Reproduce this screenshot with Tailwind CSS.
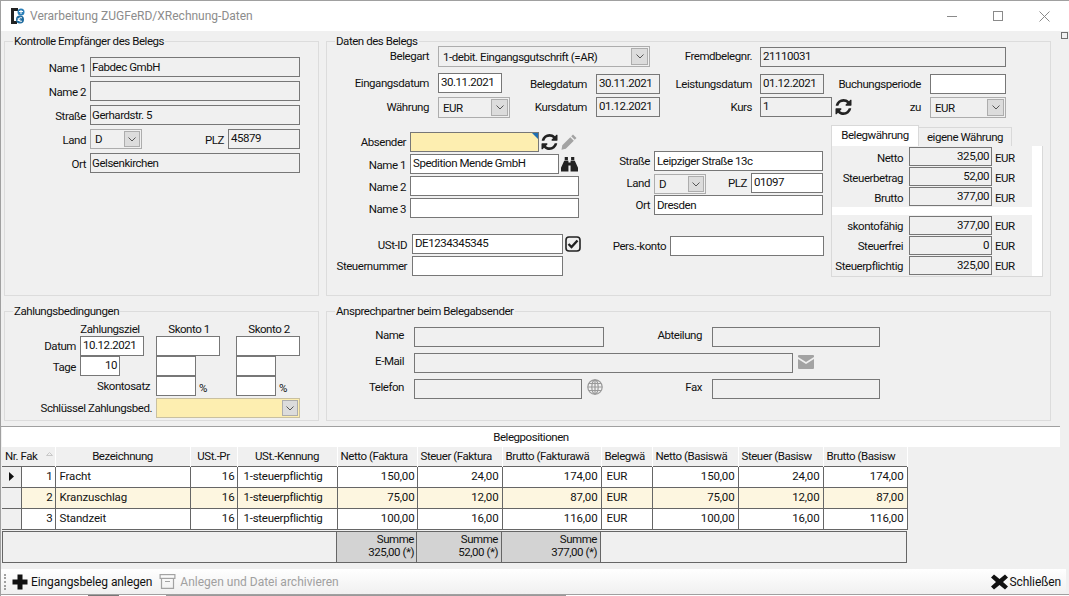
<!DOCTYPE html>
<html lang="de">
<head>
<meta charset="UTF-8">
<title>Verarbeitung ZUGFeRD/XRechnung-Daten</title>
<script src="https://cdn.jsdelivr.net/npm/@tailwindcss/browser@4"></script>
</head>
<body class="h-[596px] w-[1069px] overflow-hidden bg-white font-['Roboto',sans-serif] text-[11.5px] leading-5 tracking-[-0.45px] text-[#111]">
<div class="relative flex h-[596px] flex-col border-t border-l border-[#a0a0a0] bg-[#f0f0f0]">

  <!-- Titelleiste -->
  <div class="flex h-[30px] items-center bg-white">
    <svg class="ml-[10px] h-[16px] w-[14px]" viewBox="0 0 14 16"><path fill="#222" d="M0 0h7v3H3v10h3v3H0z"/><circle cx="10" cy="4" r="3.5" fill="#2b7fb8"/><circle cx="9" cy="11.500" r="4" fill="#1d6a9e"/><path d="M8 3.500h4M10 2v4M11 10a2 2 0 1 0 0 3M6.500 11h3M6.500 12.500h3" stroke="#fff" stroke-width="1" fill="none"/></svg>
    <span class="ml-[5px] text-[12px] tracking-[0] text-[#8c8c8c]">Verarbeitung ZUGFeRD/XRechnung-Daten</span>
    <div class="ml-auto mr-[2px] flex h-full items-center">
      <div class="flex h-full w-[46px] items-center justify-center"><div class="h-px w-[10px] bg-[#8a8a8a]"></div></div>
      <div class="flex h-full w-[46px] items-center justify-center"><div class="h-[10px] w-[10px] border border-[#8a8a8a]"></div></div>
      <div class="flex h-full w-[46px] items-center justify-center"><svg class="h-[11px] w-[11px]" viewBox="0 0 11 11"><path d="M0.500 0.500l10 10M10.500 0.500l-10 10" stroke="#8a8a8a" fill="none"/></svg></div>
    </div>
  </div>
  <div class="absolute right-[1px] top-[31px] h-[7px] w-[7px] border border-[#707070] bg-[#f0f0f0]"></div>

  <!-- obere Gruppen -->
  <div class="mt-[10px] grid h-[255px] grid-cols-[315px_725px] gap-x-[7px] pl-[3px]">

    <div class="relative border border-[#dcdcdc] pt-[15px] leading-[22px]">
      <span class="absolute -top-[11px] left-[8px] bg-[#f0f0f0] px-px leading-5">Kontrolle Empfänger des Belegs</span>
      <div class="flex h-5"><span class="w-[81px] text-right">Name 1</span><div class="ml-1 h-5 w-[210px] border border-[#777] px-[1px] leading-[19px]">Fabdec GmbH</div></div>
      <div class="mt-1 flex h-5"><span class="w-[81px] text-right">Name 2</span><div class="ml-1 h-5 w-[210px] border border-[#777] px-[1px] leading-[19px]"></div></div>
      <div class="mt-1 flex h-5"><span class="w-[81px] text-right">Straße</span><div class="ml-1 h-5 w-[210px] border border-[#777] px-[1px] leading-[19px]">Gerhardstr. 5</div></div>
      <div class="mt-1 flex h-5"><span class="w-[81px] text-right">Land</span>
        <div class="ml-1 flex h-5 w-[52px] items-center border border-[#adadad] pl-1 leading-5">D<span class="ml-auto mr-px flex h-4 w-4 items-center justify-center border border-[#adadad] bg-[#dcdcdc]"><svg class="h-[5px] w-[8px]" viewBox="0 0 8 5"><path d="M0.500 0.500l3.500 3.500l3.500-3.500" stroke="#555" fill="none"/></svg></span></div>
        <span class="w-[82px] text-right">PLZ</span><div class="ml-1 h-5 w-[72px] border border-[#777] px-[2px] leading-[17px]">45879</div></div>
      <div class="mt-1 flex h-5"><span class="w-[81px] text-right">Ort</span><div class="ml-1 h-5 w-[210px] border border-[#777] px-[1px] leading-[19px]">Gelsenkirchen</div></div>
    </div>

    <div class="relative border border-[#dcdcdc] pt-[4px]">
      <span class="absolute -top-[11px] left-[8px] bg-[#f0f0f0] px-px">Daten des Belegs</span>

      <div class="flex h-[21px]"><span class="w-[102px] text-right">Belegart</span>
        <div class="ml-[9px] flex h-[21px] w-[212px] items-center border border-[#adadad] pl-1">1-debit. Eingangsgutschrift (=AR)<span class="ml-auto mr-px flex h-[17px] w-[17px] items-center justify-center border border-[#adadad] bg-[#dcdcdc]"><svg class="h-[5px] w-[8px]" viewBox="0 0 8 5"><path d="M0.500 0.500l3.500 3.500l3.500-3.500" stroke="#555" fill="none"/></svg></span></div>
        <span class="w-[102px] text-right">Fremdbelegnr.</span><div class="ml-2 mt-px h-5 w-[246px] border border-[#777] px-[2px] leading-[17px]">21110031</div></div>

      <div class="mt-[6px] flex h-[21px]"><span class="w-[102px] text-right">Eingangsdatum</span>
        <div class="ml-[9px] h-5 w-16 border border-[#777] bg-white px-[2px] leading-[17px]">30.11.2021</div>
        <span class="mt-px w-[85px] text-right">Belegdatum</span><div class="ml-[9px] mt-px h-5 w-16 border border-[#777] px-[2px] leading-[17px]">30.11.2021</div>
        <span class="mt-px w-[92px] text-right">Leistungsdatum</span><div class="ml-2 mt-px h-5 w-16 border border-[#777] px-[2px] leading-[17px]">01.12.2021</div>
        <span class="mt-px w-[97px] text-right">Buchungsperiode</span><div class="ml-[9px] mt-px h-5 w-[76px] border border-[#777] bg-white"></div></div>

      <div class="mt-[3px] flex h-[21px]"><span class="w-[102px] text-right">Währung</span>
        <div class="ml-[9px] flex h-[21px] w-[72px] items-center border border-[#adadad] pl-1">EUR<span class="ml-auto mr-px flex h-[17px] w-[17px] items-center justify-center border border-[#adadad] bg-[#dcdcdc]"><svg class="h-[5px] w-[8px]" viewBox="0 0 8 5"><path d="M0.500 0.500l3.500 3.500l3.500-3.500" stroke="#555" fill="none"/></svg></span></div>
        <span class="w-[77px] text-right">Kursdatum</span><div class="ml-[9px] h-5 w-16 border border-[#777] px-[2px] leading-[17px]">01.12.2021</div>
        <span class="w-[92px] text-right">Kurs</span><div class="ml-2 h-5 w-[72px] border border-[#777] px-[2px] leading-[17px]">1</div>
        <svg class="ml-[3px] mt-[2px] h-[16px] w-[17px]" viewBox="0 0 1536 1536"><path fill="#222" d="M1511 928q0 5-1 7-64 268-268 434.500t-478 166.500q-146 0-282.500-55t-243.500-157l-129 129q-19 19-45 19t-45-19-19-45v-448q0-26 19-45t45-19h448q26 0 45 19t19 45-19 45l-137 137q71 66 161 102t187 36q134 0 250-65t186-179q11-17 53-117 8-23 30-23h192q13 0 22.500 9.500t9.500 22.500zM1536 128v448q0 26-19 45t-45 19h-448q-26 0-45-19t-19-45 19-45l138-138q-148-137-349-137-134 0-250 65t-186 179q-11 17-53 117-8 23-30 23h-199q-13 0-22.500-9.500t-9.500-22.500v-7q65-268 270-434.500t480-166.500q146 0 284 55.500t245 156.500l130-129q19-19 45-19t45 19 19 45z"/></svg>
        <span class="w-[69px] text-right">zu</span>
        <div class="ml-[9px] flex h-[21px] w-[76px] items-center border border-[#adadad] pl-1">EUR<span class="ml-auto mr-px flex h-[17px] w-[17px] items-center justify-center border border-[#adadad] bg-[#dcdcdc]"><svg class="h-[5px] w-[8px]" viewBox="0 0 8 5"><path d="M0.500 0.500l3.500 3.500l3.500-3.500" stroke="#555" fill="none"/></svg></span></div></div>

      <div class="flex">
        <!-- Absender -->
        <div class="w-[285px]">
          <div class="mt-[14px] flex h-5"><span class="w-[79px] text-right">Absender</span>
            <div class="relative ml-1 h-5 w-[129px] border border-[#777] bg-[#fdeeb0]"><div class="absolute right-0 top-0 h-0 w-0 border-l-[6px] border-t-[6px] border-l-transparent border-t-[#1f6fb2]"></div></div>
            <svg class="ml-[2px] mt-[2px] h-[16px] w-[17px]" viewBox="0 0 1536 1536"><path fill="#222" d="M1511 928q0 5-1 7-64 268-268 434.500t-478 166.500q-146 0-282.500-55t-243.500-157l-129 129q-19 19-45 19t-45-19-19-45v-448q0-26 19-45t45-19h448q26 0 45 19t19 45-19 45l-137 137q71 66 161 102t187 36q134 0 250-65t186-179q11-17 53-117 8-23 30-23h192q13 0 22.500 9.500t9.500 22.500zM1536 128v448q0 26-19 45t-45 19h-448q-26 0-45-19t-19-45 19-45l138-138q-148-137-349-137-134 0-250 65t-186 179q-11 17-53 117-8 23-30 23h-199q-13 0-22.500-9.500t-9.500-22.500v-7q65-268 270-434.500t480-166.500q146 0 284 55.500t245 156.500l130-129q19-19 45-19t45 19 19 45z"/></svg>
            <svg class="ml-[3px] mt-[2px] h-[16px] w-[16px]" viewBox="0 0 16 16"><path fill="#a3a3a3" d="M12 0.500l3.500 3.500l-1.800 1.800l-3.500-3.500zM9.300 3.200l3.500 3.500l-8 8l-4.300 1l0.800-4.500z"/></svg></div>
          <div class="mt-[2px] flex h-5"><span class="w-[79px] text-right leading-[22px]">Name 1</span>
            <div class="ml-1 h-5 w-[149px] border border-[#777] bg-white px-[2px] leading-[17px]">Spedition Mende GmbH</div>
            <svg class="ml-[2px] mt-[3px] h-[15px] w-[17px]" viewBox="0 0 16 14"><path fill="#222" d="M3.500 0h3v3h-3zM9.500 0h3v3h-3zM3 3.500h4v10h-7v-3.500zM9 3.500h4l3 6.500v3.500h-7zM7 5h2v3h-2z"/></svg></div>
          <div class="mt-[2px] flex h-5"><span class="w-[79px] text-right leading-[22px]">Name 2</span><div class="ml-1 h-5 w-[169px] border border-[#777] bg-white"></div></div>
          <div class="mt-[2px] flex h-5"><span class="w-[79px] text-right leading-[22px]">Name 3</span><div class="ml-1 h-5 w-[169px] border border-[#777] bg-white"></div></div>
          <div class="mt-4 flex h-5"><span class="w-[80px] text-right leading-[22px]">USt-ID</span>
            <div class="ml-[5px] h-5 w-[151px] border border-[#777] bg-white px-[2px] leading-[17px]">DE1234345345</div>
            <svg class="ml-[2px] mt-[2px] h-[16px] w-[16px]" viewBox="0 0 16 16"><rect x="1" y="1" width="14" height="14" rx="3" fill="none" stroke="#222" stroke-width="1.600"/><path d="M3.500 8l3 3l6-6.500" fill="none" stroke="#222" stroke-width="2.400"/></svg></div>
          <div class="mt-[2px] flex h-5"><span class="w-[80px] text-right">Steuernummer</span><div class="ml-[5px] h-5 w-[151px] border border-[#777] bg-white"></div></div>
        </div>

        <!-- Adresse -->
        <div class="w-[212px]">
          <div class="mt-[33px] flex h-5"><span class="w-[38px] text-right">Straße</span><div class="ml-1 h-5 w-[169px] border border-[#777] bg-white px-[2px] leading-[19px]">Leipziger Straße 13c</div></div>
          <div class="mt-[2px] flex h-[20px]"><span class="w-[38px] text-right">Land</span>
            <div class="ml-1 mt-px flex h-5 w-[52px] items-center border border-[#adadad] pl-1">D<span class="ml-auto mr-px flex h-4 w-4 items-center justify-center border border-[#adadad] bg-[#dcdcdc]"><svg class="h-[5px] w-[8px]" viewBox="0 0 8 5"><path d="M0.500 0.500l3.500 3.500l3.500-3.500" stroke="#555" fill="none"/></svg></span></div>
            <span class="w-[41px] text-right">PLZ</span><div class="ml-1 h-5 w-[72px] border border-[#777] bg-white px-[2px] leading-[17px]">01097</div></div>
          <div class="mt-[2px] flex h-5"><span class="w-[38px] text-right">Ort</span><div class="ml-1 h-5 w-[169px] border border-[#777] bg-white px-[2px] leading-[19px]">Dresden</div></div>
          <div class="mt-[21px] flex h-5"><span class="w-[54px] whitespace-nowrap text-right">Pers.-konto</span><div class="ml-1 h-5 w-[154px] border border-[#777] bg-white"></div></div>
        </div>

        <!-- Summen -->
        <div class="ml-[7px] mt-[7px] w-[212px]">
          <div class="flex h-[21px] items-end">
            <div class="h-[21px] w-[88px] border-x border-t border-[#d9d9d9] bg-white text-center leading-[18px]">Belegwährung</div>
            <div class="h-[19px] w-[93px] border-r border-t border-[#d9d9d9] text-center leading-[18px]">eigene Währung</div>
          </div>
          <div class="h-[131px] border border-t-0 border-[#d9d9d9] bg-white pr-[10px]">
            <div class="bg-[#f0f0f0] pt-px leading-[22px]">
              <div class="flex h-[20px]"><span class="w-[71px] text-right">Netto</span><div class="ml-[6px] h-[19px] w-[83px] border border-[#777] px-[2px] text-right leading-[16px]">325,00</div><span class="ml-[3px]">EUR</span></div>
              <div class="flex h-[20px]"><span class="w-[71px] text-right">Steuerbetrag</span><div class="ml-[6px] h-[19px] w-[83px] border border-[#777] px-[2px] text-right leading-[16px]">52,00</div><span class="ml-[3px]">EUR</span></div>
              <div class="flex h-[20px]"><span class="w-[71px] text-right">Brutto</span><div class="ml-[6px] h-[19px] w-[83px] border border-[#777] px-[2px] text-right leading-[16px]">377,00</div><span class="ml-[3px]">EUR</span></div>
            </div>
            <div class="mt-2 bg-[#f0f0f0] pt-px">
              <div class="flex h-[20px]"><span class="w-[71px] text-right">skontofähig</span><div class="ml-[6px] h-[19px] w-[83px] border border-[#777] px-[2px] text-right leading-[16px]">377,00</div><span class="ml-[3px]">EUR</span></div>
              <div class="flex h-[20px]"><span class="w-[71px] text-right">Steuerfrei</span><div class="ml-[6px] h-[19px] w-[83px] border border-[#777] px-[2px] text-right leading-[16px]">0</div><span class="ml-[3px]">EUR</span></div>
              <div class="flex h-[20px]"><span class="w-[71px] whitespace-nowrap text-right">Steuerpflichtig</span><div class="ml-[6px] h-[19px] w-[83px] border border-[#777] px-[2px] text-right leading-[16px]">325,00</div><span class="ml-[3px]">EUR</span></div>
            </div>
          </div>
        </div>
      </div>
    </div>
  </div>

  <!-- untere Gruppen -->
  <div class="mt-[15px] grid h-[110px] grid-cols-[315px_725px] gap-x-[7px] pl-[3px]">
    <div class="relative border border-[#dcdcdc]">
      <span class="absolute -top-[11px] left-[8px] bg-[#f0f0f0] px-px">Zahlungsbedingungen</span>
      <div class="mt-[10px] flex h-[14px] leading-[14px]"><span class="ml-[73px] w-[64px] text-center">Zahlungsziel</span><span class="ml-[15px] w-16 text-center">Skonto 1</span><span class="ml-4 w-16 text-center">Skonto 2</span></div>
      <div class="flex h-5"><span class="w-[71px] text-right">Datum</span><div class="ml-1 h-5 w-16 border border-[#777] bg-white px-[2px] leading-[17px]">10.12.2021</div><div class="ml-3 h-5 w-16 border border-[#777] bg-white"></div><div class="ml-4 h-5 w-16 border border-[#777] bg-white"></div></div>
      <div class="flex h-5"><span class="w-[71px] text-right leading-[22px]">Tage</span><div class="ml-1 h-5 w-10 border border-[#777] bg-white px-[2px] text-right leading-[17px]">10</div><div class="ml-9 h-5 w-10 border border-[#777] bg-white"></div><div class="ml-10 h-5 w-10 border border-[#777] bg-white"></div></div>
      <div class="flex h-5"><span class="w-[145px] text-right">Skontosatz</span><div class="ml-[6px] h-5 w-10 border border-[#777] bg-white"></div><span class="w-10 pl-[3px] leading-6">%</span><div class="h-5 w-10 border border-[#777] bg-white"></div><span class="pl-[3px] leading-6">%</span></div>
      <div class="mt-[2px] flex h-5"><span class="w-[147px] whitespace-nowrap text-right">Schlüssel Zahlungsbed.</span><div class="ml-1 flex h-5 w-[144px] items-center border border-[#c9c0a0] bg-[#fdeeb0]"><span class="ml-auto mr-px flex h-4 w-4 items-center justify-center border border-[#adadad] bg-[#dcdcdc]"><svg class="h-[5px] w-[8px]" viewBox="0 0 8 5"><path d="M0.500 0.500l3.500 3.500l3.500-3.500" stroke="#555" fill="none"/></svg></span></div></div>
    </div>

    <div class="relative border border-[#dcdcdc] pt-[15px]">
      <span class="absolute -top-[11px] left-[8px] bg-[#f0f0f0] px-px">Ansprechpartner beim Belegabsender</span>
      <div class="flex h-5"><span class="w-[77px] text-right leading-4">Name</span><div class="ml-[10px] h-5 w-[190px] border border-[#777]"></div><span class="w-[98px] text-right leading-4">Abteilung</span><div class="ml-[10px] h-5 w-[168px] border border-[#777]"></div></div>
      <div class="mt-[6px] flex h-5"><span class="w-[77px] text-right leading-4">E-Mail</span><div class="ml-[10px] h-5 w-[379px] border border-[#777]"></div>
        <svg class="ml-[5px] mt-[2px] h-[14px] w-[16px]" viewBox="0 0 16 14"><path fill="#a3a3a3" d="M1 0h14a1 1 0 0 1 1 1v1l-8 5l-8-5v-1a1 1 0 0 1 1-1zM0 4l8 5l8-5v9a1 1 0 0 1-1 1h-14a1 1 0 0 1-1-1z"/></svg></div>
      <div class="mt-[6px] flex h-5"><span class="w-[77px] text-right leading-4">Telefon</span><div class="ml-[10px] h-5 w-[168px] border border-[#777]"></div>
        <svg class="ml-[5px] h-[16px] w-[16px]" viewBox="0 0 16 16"><g fill="none" stroke="#9a9a9a" stroke-width="1.200"><circle cx="8" cy="8" r="7.200"/><ellipse cx="8" cy="8" rx="3.200" ry="7.200"/><path d="M8 0.800v14.400M0.800 8h14.400M1.800 4.500h12.400M1.800 11.500h12.400"/></g></svg>
        <span class="w-[99px] text-right leading-4">Fax</span><div class="ml-[10px] h-5 w-[168px] border border-[#777]"></div></div>
    </div>
  </div>

  <!-- Belegpositionen -->
  <div class="mt-[5px] h-[143px] w-[1059px] border-t border-[#a0a0a0] pl-px">
    <div class="h-5 bg-white text-center leading-5">Belegpositionen</div>
    <table class="w-[905px] table-fixed border-collapse leading-4">
      <colgroup><col class="w-[19px]"><col class="w-[34px]"><col class="w-[135px]"><col class="w-[47px]"><col class="w-[100px]"><col class="w-[80px]"><col class="w-[85px]"><col class="w-[99px]"><col class="w-[51px]"><col class="w-[86px]"><col class="w-[85px]"><col class="w-[84px]"></colgroup>
      <thead>
        <tr class="h-[19px] border-b border-[#666] bg-[#f0f0f0]">
          <th colspan="2" class="relative overflow-hidden whitespace-nowrap border-r border-white pl-[3px] text-left font-normal">Nr. Fak<svg class="absolute right-[2px] top-[5px] h-[4px] w-[7px]" viewBox="0 0 7 4"><path d="M0.500 3.500l3-3l3 3z" fill="none" stroke="#c8c8c8"/></svg></th>
          <th class="border-r border-white text-center font-normal">Bezeichnung</th>
          <th class="overflow-hidden whitespace-nowrap border-r border-white text-center font-normal">USt.-Pr</th>
          <th class="border-r border-white text-center font-normal">USt.-Kennung</th>
          <th class="overflow-hidden whitespace-nowrap border-r border-white pl-[3px] text-left font-normal">Netto (Faktura</th>
          <th class="overflow-hidden whitespace-nowrap border-r border-white pl-[3px] text-left font-normal">Steuer (Faktura</th>
          <th class="overflow-hidden whitespace-nowrap border-r border-white pl-[3px] text-left font-normal">Brutto (Fakturawä</th>
          <th class="overflow-hidden whitespace-nowrap border-r border-white pl-[3px] text-left font-normal">Belegwä</th>
          <th class="overflow-hidden whitespace-nowrap border-r border-white pl-[3px] text-left font-normal">Netto (Basiswä</th>
          <th class="overflow-hidden whitespace-nowrap border-r border-white pl-[3px] text-left font-normal">Steuer (Basisw</th>
          <th class="overflow-hidden whitespace-nowrap border-r border-white pl-[3px] text-left font-normal">Brutto (Basisw</th>
        </tr>
      </thead>
      <tbody class="tracking-[-0.15px]">
        <tr class="h-[21px] border-b border-[#666] bg-white">
          <td class="border-r border-[#666] bg-[#f0f0f0] pl-[7px]"><svg class="h-[9px] w-[5px]" viewBox="0 0 5 9"><path d="M0 0l5 4.500l-5 4.500z" fill="#111"/></svg></td>
          <td class="border-r border-[#666] pb-[2px] pr-[2px] text-right">1</td>
          <td class="border-r border-[#666] pb-[2px] pl-[4px]">Fracht</td>
          <td class="border-r border-[#666] pb-[2px] pr-[2px] text-right">16</td>
          <td class="border-r border-[#666] pb-[2px] pl-[6px] tracking-[-0.25px]">1-steuerpflichtig</td>
          <td class="border-r border-[#666] pb-[2px] pr-[2px] text-right">150,00</td>
          <td class="border-r border-[#666] pb-[2px] pr-[3px] text-right">24,00</td>
          <td class="border-r border-[#666] pb-[2px] pr-[3px] text-right">174,00</td>
          <td class="border-r border-[#666] pb-[2px] pl-[5px]">EUR</td>
          <td class="border-r border-[#666] pb-[2px] pr-[3px] text-right">150,00</td>
          <td class="border-r border-[#666] pb-[2px] pr-[3px] text-right">24,00</td>
          <td class="border-r border-[#666] pb-[2px] pr-[3px] text-right">174,00</td>
        </tr>
        <tr class="h-[21px] border-b border-[#666] bg-[#fdf6e0]">
          <td class="border-r border-[#666] bg-[#f0f0f0]"></td>
          <td class="border-r border-[#666] pb-[2px] pr-[2px] text-right">2</td>
          <td class="border-r border-[#666] pb-[2px] pl-[4px]">Kranzuschlag</td>
          <td class="border-r border-[#666] pb-[2px] pr-[2px] text-right">16</td>
          <td class="border-r border-[#666] pb-[2px] pl-[6px] tracking-[-0.25px]">1-steuerpflichtig</td>
          <td class="border-r border-[#666] pb-[2px] pr-[2px] text-right">75,00</td>
          <td class="border-r border-[#666] pb-[2px] pr-[3px] text-right">12,00</td>
          <td class="border-r border-[#666] pb-[2px] pr-[3px] text-right">87,00</td>
          <td class="border-r border-[#666] pb-[2px] pl-[5px]">EUR</td>
          <td class="border-r border-[#666] pb-[2px] pr-[3px] text-right">75,00</td>
          <td class="border-r border-[#666] pb-[2px] pr-[3px] text-right">12,00</td>
          <td class="border-r border-[#666] pb-[2px] pr-[3px] text-right">87,00</td>
        </tr>
        <tr class="h-[21px] border-b border-[#666] bg-white">
          <td class="border-r border-[#666] bg-[#f0f0f0]"></td>
          <td class="border-r border-[#666] pb-[2px] pr-[2px] text-right">3</td>
          <td class="border-r border-[#666] pb-[2px] pl-[4px]">Standzeit</td>
          <td class="border-r border-[#666] pb-[2px] pr-[2px] text-right">16</td>
          <td class="border-r border-[#666] pb-[2px] pl-[6px] tracking-[-0.25px]">1-steuerpflichtig</td>
          <td class="border-r border-[#666] pb-[2px] pr-[2px] text-right">100,00</td>
          <td class="border-r border-[#666] pb-[2px] pr-[3px] text-right">16,00</td>
          <td class="border-r border-[#666] pb-[2px] pr-[3px] text-right">116,00</td>
          <td class="border-r border-[#666] pb-[2px] pl-[5px]">EUR</td>
          <td class="border-r border-[#666] pb-[2px] pr-[3px] text-right">100,00</td>
          <td class="border-r border-[#666] pb-[2px] pr-[3px] text-right">16,00</td>
          <td class="border-r border-[#666] pb-[2px] pr-[3px] text-right">116,00</td>
        </tr>
      </tbody>
    </table>
    <div class="mt-px flex h-[32px] w-[905px] border border-[#666] text-right leading-[13px]">
      <div class="w-[334px] border-r border-[#666]"></div>
      <div class="w-[80px] border-r border-[#666] bg-[#d3d3d3] pr-[2px] pt-px">Summe<br>325,00 (*)</div>
      <div class="w-[85px] border-r border-[#666] bg-[#d3d3d3] pr-[3px] pt-px">Summe<br>52,00 (*)</div>
      <div class="w-[99px] border-r border-[#666] bg-[#d3d3d3] pr-[3px] pt-px">Summe<br>377,00 (*)</div>
    </div>
  </div>

  <!-- Toolbar -->
  <div class="flex h-[25px] w-[1065px] items-center bg-linear-to-b from-white to-[#f0f0f0] text-[12px] tracking-[-0.1px]">
    <div class="ml-[3px] h-[16px] w-[2px] border-l-2 border-dotted border-[#a0a0a0]"></div>
    <svg class="ml-[6px] h-[16px] w-[16px]" viewBox="0 0 16 16"><path fill="#111" d="M5.500 0.500h5v5h5v5h-5v5h-5v-5h-5v-5h5z"/></svg>
    <span class="ml-[3px]">Eingangsbeleg anlegen</span>
    <svg class="ml-[7px] h-[15px] w-[17px]" viewBox="0 0 16 15"><g fill="none" stroke="#a3a3a3" stroke-width="1.200"><rect x="0.600" y="0.600" width="14.800" height="3.800" /><path d="M2 4.500v9.900h12v-9.900M5.500 7.500h5"/></g></svg>
    <span class="ml-[4px] tracking-[0] text-[#a0a0a0]">Anlegen und Datei archivieren</span>
    <svg class="ml-auto h-[16px] w-[17px]" viewBox="0 0 17 16"><path fill="#111" d="M3 0.500l5.500 4.500l5.500-4.500l3 3l-5 4.500l5 4.500l-3 3l-5.500-4.500l-5.500 4.500l-3-3l5-4.500l-5-4.500z"/></svg>
    <span class="ml-[2px] mr-[5px]">Schließen</span>
  </div>
  <div class="flex h-[2px] border-t border-[#a0a0a0] bg-white"><div class="ml-[87px] h-px w-[31px] bg-[#777]"></div><div class="ml-[47px] h-px w-[400px] bg-[#999]"></div></div>
</div>
</body>
</html>
